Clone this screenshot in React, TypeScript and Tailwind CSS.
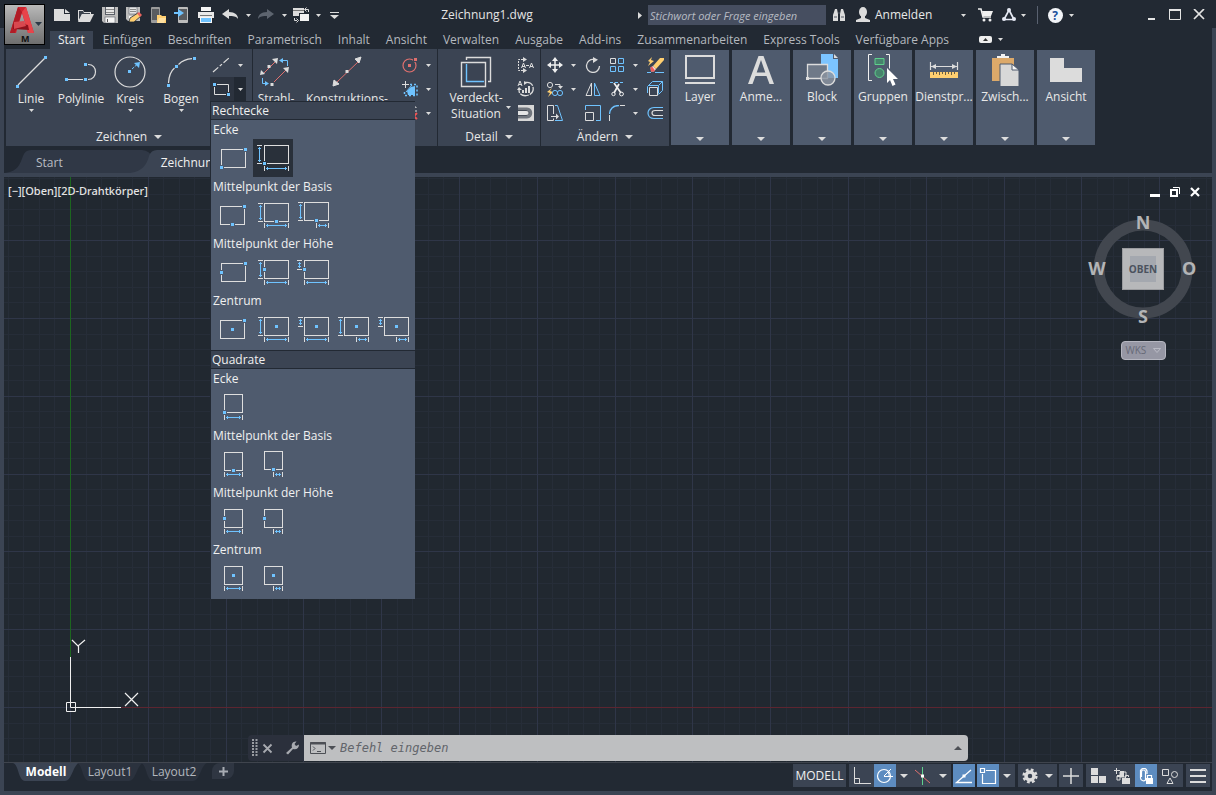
import React from "react";

type Kids = { children?: React.ReactNode };

function Ic({ w = 16, h = 16, children }: { w?: number; h?: number } & Kids) {
  return (
    <svg width={w} height={h} viewBox={`0 0 ${w} ${h}`} fill="none" className="shrink-0" aria-hidden="true">
      {children}
    </svg>
  );
}

const LIGHT = "#dcdcdc";
const BLUE = "#6fc3ff";
const RED = "#e0706e";
const YELLOW = "#ffcf70";

function Caret({ big = false }: { big?: boolean }) {
  return big ? (
    <Ic w={8} h={4}>
      <path d="M0 0h8L4 4z" fill={LIGHT} />
    </Ic>
  ) : (
    <Ic w={5} h={3}>
      <path d="M0 0h5L2.5 3z" fill={LIGHT} />
    </Ic>
  );
}

function Dot({ x, y, c = BLUE, halo }: { x: number; y: number; c?: string; halo?: string }) {
  return (
    <>
      {halo && <rect x={x - 2.5} y={y - 2.5} width={5} height={5} fill={halo} />}
      <rect x={x - 1.5} y={y - 1.5} width={3} height={3} fill={c} />
    </>
  );
}

/* ---------- quick access icons ---------- */

const NewIcon = () => (
  <Ic><path d="M0 2h10v5h6v7H0z" fill={LIGHT} /><path d="M11 2l5 4h-5z" fill={LIGHT} /></Ic>
);
const OpenIcon = () => (
  <Ic><path d="M0 14V3h5l1 2h7v2" fill={LIGHT} /><path d="M1 13V4h4l1 2h6v1H4z" fill="#3a414c" /><path d="M4 7h12l-4 8H0z" fill={LIGHT} /></Ic>
);
const SaveIcon = () => (
  <Ic>
    <path d="M0 0h16v16H2l-2-2z" fill="#bdbdbd" />
    <rect x="3" y="0" width="10" height="8" fill="#5a5f68" />
    <rect x="4" y="0" width="8" height="7" fill="#e6e6e6" />
    <path d="M4 2.500h8M4 5.500h8" stroke="#8a8a8a" />
    <rect x="3" y="10" width="10" height="6" fill="#f5f5f5" stroke="#5a5f68" strokeWidth=".6" />
    <rect x="5" y="12" width="1" height="3" fill="#555" />
  </Ic>
);
const SaveAsIcon = () => (
  <Ic w={17}>
    <path d="M0 0h14v14H2l-2-2z" fill="#bdbdbd" />
    <rect x="3" y="0" width="8" height="7" fill="#e6e6e6" stroke="#5a5f68" strokeWidth=".6" />
    <path d="M4 2.500h6M4 4.500h6" stroke="#8a8a8a" />
    <path d="M3 9h6v5H3z" fill="#f5f5f5" />
    <path d="M3 15l1-4 8-5 3 3-7 6z" fill={YELLOW} stroke="#222933" strokeWidth=".8" />
    <path d="M11 6.500l2-1.500 3 3-2 2z" fill="#e9645f" />
  </Ic>
);
const PhoneFolder = () => (
  <Ic><rect x="1" y="0" width="9" height="16" rx="1" fill="#9b9b9b" /><rect x="2" y="2" width="7" height="11" fill="#595c60" /><path d="M7 8h4l1 1h4v7H7z" fill={YELLOW} /><path d="M9 11h7l-2 5H7z" fill="#ffe0a0" /></Ic>
);
const PhoneArrow = () => (
  <Ic><rect x="4" y="0" width="10" height="16" rx="1" fill="#bcbcbc" /><rect x="5" y="2" width="8" height="11" fill="#595c60" /><path d="M0 5h4V2l6 4-6 4V7H0z" fill={BLUE} /></Ic>
);
const PrintIcon = () => (
  <Ic><path d="M3 0h10v4H3z" fill="#f5f5f5" /><rect x="0" y="5" width="16" height="6" fill="#e9e9e9" /><path d="M2 8.500h12" stroke="#777" /><path d="M2 10h12v6H2z" fill="#f5f5f5" /><rect x="3" y="11" width="10" height="4" fill={BLUE} /></Ic>
);
const UndoIcon = () => (
  <Ic><path d="M0 7l7-5v3c6 0 9 3 9 7-2-3-5-3-9-3v3z" fill={LIGHT} /></Ic>
);
const RedoIcon = () => (
  <Ic><path d="M16 7l-7-5v3c-6 0-9 3-9 7 2-3 5-3 9-3v3z" fill="#5d646f" /></Ic>
);
const WorkspaceIcon = () => (
  <Ic w={18}><rect x="0" y="1" width="11" height="8" fill={LIGHT} /><path d="M0 3.500h11" stroke="#777" /><rect x="6.500" y="6.500" width="10" height="8" fill="#f2f2f2" stroke="#222933" /><path d="M12 2.500h3.500V5M13.500 .5l-2 2 2 2M1.500 11v2.500H4M3.500 11.500l2 2-2 2" stroke={LIGHT} /></Ic>
);

/* ---------- ribbon icons ---------- */

const LineIcon = () => (
  <Ic w={32} h={32}><path d="M3 29L30 2" stroke={LIGHT} strokeWidth="1.2" /><Dot x={2.5} y={30.5} /><Dot x={30.5} y={1.5} /></Ic>
);
const PolylineIcon = () => (
  <Ic w={32} h={32}><path d="M3 23.500H18M23 8.500C33 8 33 23.500 23 23.500" stroke={LIGHT} strokeWidth="1.2" /><Dot x={1.5} y={23.500} /><Dot x={20.500} y={23.500} /><Dot x={20.500} y={8.500} /></Ic>
);
const CircleIcon = () => (
  <Ic w={32} h={32}><circle cx="16" cy="16" r="15" stroke={LIGHT} strokeWidth="1.2" /><Dot x={15.500} y={15.500} /><path d="M18 13l5-4.500" stroke={BLUE} strokeDasharray="3 1" /><path d="M20 7l6-1-1 6z" fill={BLUE} /></Ic>
);
const ArcIcon = () => (
  <Ic w={32} h={32}><path d="M3.500 27C3.800 20 6 15 9.500 12M13.500 8.500C17 5 22 3 27 2.700" stroke={LIGHT} strokeWidth="1.2" /><Dot x={3.500} y={29.500} /><Dot x={11.500} y={10.500} /><Dot x={29.500} y={2.500} /></Ic>
);
const RayIcon = () => (
  <Ic w={32} h={32}>
    <path d="M4 17L15 6M14 26l14-14" stroke={RED} />
    <path d="M12 3l6-1-1 6zM1 14l-1 5 5-1zM23 12l6-1-1 6z" fill={LIGHT} />
    <Dot x={9} y={10.500} c={LIGHT} /><Dot x={12} y={28.500} c={LIGHT} />
    <path d="M27.500 10V4.500H21M2.500 22v5.500H7" stroke={BLUE} />
    <path d="M23 2v5l-4-2.500zM5 25v5l4-2.500z" fill={BLUE} />
  </Ic>
);
const XLineIcon = () => (
  <Ic w={32} h={32}><path d="M5 27L28 5" stroke={RED} /><path d="M30 1l-6 2 4 4zM2 30l1-6 5 4z" fill={LIGHT} stroke={LIGHT} /><Dot x={16} y={15.500} c={LIGHT} /></Ic>
);
const HiddenViewIcon = () => (
  <Ic w={32} h={32}><path d="M1.500 6.500h24v24h-24z" stroke={LIGHT} strokeWidth="1.400" /><path d="M6.500 4V1.500h24v24H28" stroke={LIGHT} strokeWidth="1.400" /><path d="M6.500 8v17.500H24" stroke={BLUE} strokeWidth="1.400" /></Ic>
);
const SegmentIcon = () => (
  <Ic w={20}><path d="M1 15L17 1" stroke={LIGHT} strokeDasharray="7 2 3 2" strokeWidth="1.200" /></Ic>
);
const RectToolIcon = () => (
  <Ic w={20}><path d="M2.500 3.500h14v10h-14z" stroke={LIGHT} /><Dot x={2.500} y={3.500} halo="#2c333f" /><Dot x={16.500} y={13.500} halo="#2c333f" /></Ic>
);
const RedCircleIcon = () => (
  <Ic><circle cx="7.500" cy="8.500" r="6.500" stroke={RED} strokeWidth="1.200" /><Dot x={7.500} y={8.500} c={RED} /><Dot x={13.500} y={2.500} c={RED} halo="#3b4453" /></Ic>
);
const HatchRegion = () => (
  <Ic><path d="M5 10l4-4 4-1v9H6z" fill={BLUE} /><path d="M3.500 0v7M0 3.500h7" stroke={LIGHT} /><path d="M4 11l6-7" stroke={BLUE} /><path d="M8 3.500h7v11H2.500V9" stroke={BLUE} strokeDasharray="2 2" strokeWidth="1.500" /></Ic>
);
const EraseRegion = () => (
  <Ic><path d="M1 2h13v5" stroke={LIGHT} strokeDasharray="2 2" /><path d="M9 9l6 5M15 8l-6 6" stroke="#f05555" strokeWidth="2" /></Ic>
);
const TextDimIcon = () => (
  <Ic w={18}><path d="M6 2.500H1.500v11H6" stroke={LIGHT} strokeDasharray="2 1" /><path d="M6 0v5l4-2.500zM6 11v5l4-2.500z" fill={LIGHT} /><path d="M4.500 11l2-5 2 5M5 9.500h3M12.500 11l2-5 2 5M13 9.500h3M9 8.500h3" stroke={LIGHT} /></Ic>
);
const UpdateDimIcon = () => (
  <Ic w={18}><path d="M1 5l2-5 2 5M2 3.500h3" stroke={LIGHT} /><path d="M8 1.500c6-1 9 3 8 8s-9 7-13 3c-1-1-1-3-1-4" stroke={LIGHT} strokeDasharray="9 1" strokeWidth="1.300" /><path d="M7 0v4l3-2zM0 9h5L2 6z" fill={LIGHT} /><path d="M5 9h2v3H5zM8 7h2v5H8zM11 5h2v7h-2z" fill={LIGHT} /></Ic>
);
const SlotIcon = () => (
  <Ic><rect width="16" height="16" fill="#d7d7d7" /><path d="M0 4h9c5 0 5 8 0 8H0" stroke="#70757d" strokeWidth="3" /><path d="M0 5.500h8c4 0 4 5 0 5H0" fill="#e4e4e4" stroke="#454b55" /></Ic>
);
const MoveIcon = () => (
  <Ic><path d="M8 2v12M2 8h12" stroke="#f0f0f0" strokeWidth="1.500" /><path d="M8 0L5 4h6zM8 16l-3-4h6zM0 8l4-3v6zM16 8l-4-3v6z" fill="#f0f0f0" /></Ic>
);
const RotateIcon = () => (
  <Ic><path d="M9 2.500A6.500 6.500 0 1 0 14.500 9" stroke={LIGHT} strokeWidth="1.300" /><path d="M8 0l5 2.800L8 6z" fill={LIGHT} /></Ic>
);
const ArrayIcon = () => (
  <Ic><path d="M1.500 1.500h5v5h-5z" stroke={LIGHT} /><path d="M9.500 1.500h5v5h-5zM1.500 9.500h5v5h-5zM9.500 9.500h5v5h-5z" stroke={BLUE} /></Ic>
);
const ExplodeIcon = () => (
  <Ic w={17}><path d="M6 9l7-8h4v2l-8 9z" fill={YELLOW} /><path d="M5 0L1 4l2 1-2 4 6-5-3-1z" fill={YELLOW} /><path d="M3.500 10.500l2.500-1.500 3 3-2 2.500H4z" fill="#f6dada" /><path d="M3.500 10.500l1.500-1 3 4-1 1H4z" fill="#f05c5c" /><path d="M0 15.500h4M8 15.500h9" stroke={BLUE} /></Ic>
);
const CopyIcon = () => (
  <Ic><circle cx="3" cy="4" r="2.600" stroke={LIGHT} /><path d="M8 3.500h5v3" stroke={LIGHT} /><path d="M11 5h5l-2.500 3z" fill={LIGHT} /><path d="M5 7l-5 4 3 1-2 4 5-5-3-1z" fill={YELLOW} /><circle cx="8" cy="12" r="2.600" stroke={BLUE} /><circle cx="13" cy="12" r="2.600" stroke={BLUE} /></Ic>
);
const MirrorIcon = () => (
  <Ic><path d="M6.500 2v12.500H1z" stroke={LIGHT} /><path d="M9.500 2v12.500H15z" stroke={BLUE} /></Ic>
);
const TrimIcon = () => (
  <Ic><path d="M1 1.500h14" stroke={BLUE} strokeDasharray="3 2" /><path d="M5 2l7 10M10 3L5 12" stroke="#f0f0f0" strokeWidth="1.700" /><circle cx="4.500" cy="13" r="1.700" stroke="#f0f0f0" /><circle cx="12.500" cy="13" r="1.900" stroke="#f0f0f0" /></Ic>
);
const BoxIcon = () => (
  <Ic><path d="M2.500 6.500h8v8h-8z" stroke={LIGHT} /><path d="M.5 12V5.500l5-5h10v9l-4 4M2 4.500h9.500v8M12 4l3.500-3.500" stroke={BLUE} /></Ic>
);
const StretchIcon = () => (
  <Ic><path d="M6.500 9V.5h-6v15h6v-2M4 11.500h6" stroke={LIGHT} /><path d="M9 8.500l3 3-3 3z" fill={LIGHT} /><path d="M8 .5h2.500l5 15H8" stroke={BLUE} /></Ic>
);
const ScaleIcon = () => (
  <Ic><path d="M.5 7.500h8v8h-8z" stroke={LIGHT} /><path d="M.5 5V.5h15v15H11" stroke={BLUE} /></Ic>
);
const FilletIcon = () => (
  <Ic><path d="M.5 10v6M11 .5h5" stroke={LIGHT} /><path d="M.5 9C1 4 4 .5 10 .5" stroke={BLUE} strokeWidth="1.300" /></Ic>
);
const OffsetIcon = () => (
  <Ic><path d="M16 2.500H7c-8 0-8 11 0 11h9" stroke={BLUE} strokeWidth="1.200" /><path d="M16 5.500H8c-4 0-4 5 0 5h8" stroke={LIGHT} strokeWidth="1.200" /></Ic>
);

const LayerIcon = () => (
  <Ic w={32} h={32}><path d="M2 2h28v22H2z" stroke={LIGHT} strokeWidth="2" /><path d="M1 29h30" stroke={LIGHT} strokeWidth="2" /></Ic>
);
const AnnoIcon = () => (
  <Ic w={32} h={32}><path d="M13.500 2h5L29 30h-4.500l-3-8h-11l-3 8H3zM16 6l-4.300 12.500h8.600z" fill={LIGHT} fillRule="evenodd" /></Ic>
);
const BlockIcon = () => (
  <Ic w={32} h={32}><path d="M15 0h12v5h5v19H15z" fill="#7cc4ff" /><path d="M28 0l4 4h-4z" fill={LIGHT} /><path d="M1.500 10.500h20v14h-20z" fill="#6f7988" stroke={LIGHT} strokeWidth="1.300" /><circle cx="22" cy="24" r="7" fill="#8b93a0" fillOpacity=".8" stroke={LIGHT} strokeWidth="1.300" /><Dot x={1.500} y={24.500} c={LIGHT} /></Ic>
);
const GroupIcon = () => (
  <Ic w={32} h={32}><path d="M5 .5H1.500v26H5M19 .5h3.500v14" stroke="#f0f0f0" /><path d="M8 4.500h9v6H8z" fill="#46836c" stroke="#5fd08c" /><circle cx="12.500" cy="19" r="4.500" fill="#46836c" stroke="#5fd08c" /><path d="M20 14l11 11h-5l2.500 5.500-3 1.500-2.500-6-3 3z" fill="#fff" /></Ic>
);
const UtilIcon = () => (
  <Ic w={32} h={32}><path d="M2.500 8v8M29.500 8v8M3 12.500h26" stroke={LIGHT} strokeWidth="1.200" /><path d="M8 10l-5 2.500L8 15zM24 10l5 2.500-5 2.500z" fill={LIGHT} /><path d="M2 18h28v6H2z" fill={YELLOW} /><path d="M5.500 18v3M8.500 18v2M11.500 18v3M14.500 18v2M17.500 18v3M20.500 18v2M23.500 18v3M26.500 18v2" stroke="#6b5f45" /></Ic>
);
const ClipIcon = () => (
  <Ic w={32} h={32}><path d="M3 4h22v23H3z" fill="#dca96a" /><path d="M8 4V2h4V0h4v2h4v2z" fill="#f2f2f2" /><path d="M11 10h12l7 6v17H11z" fill="#d8d8d8" stroke="#4f5b6e" /><path d="M23 10l7 6h-7z" fill="#f6f6f6" stroke="#4f5b6e" /></Ic>
);
const ViewIcon = () => (
  <Ic w={32} h={32}><path d="M0 4h14v10h18v14H0z" fill={LIGHT} /></Ic>
);

/* ---------- rectangle gallery ---------- */

type Glyph = {
  name: string;
  rect: [number, number, number, number];
  dots: [number, number][];
  v?: [number, number, number];
  h?: [number, number];
  on?: boolean;
};

function RectGlyph({ g }: { g: Glyph }) {
  const [x, y, w, h] = g.rect;
  return (
    <Ic w={40} h={38}>
      <rect x={x} y={y} width={w} height={h} stroke="#dedede" />
      {g.v && (
        <>
          <path d={`M${g.v[0] - 2.500} ${g.v[1]}h5M${g.v[0] - 2.500} ${g.v[2]}h5`} stroke={LIGHT} />
          <path d={`M${g.v[0]} ${g.v[1] + 1.500}V${g.v[2] - 1.500}M${g.v[0] - 1.500} ${g.v[1] + 3}h3M${g.v[0] - 1.500} ${g.v[2] - 3}h3`} stroke={BLUE} />
        </>
      )}
      {g.h && (
        <>
          <path d={`M${g.h[0]} 27v5M${g.h[1]} 27v5`} stroke={LIGHT} />
          <path d={`M${g.h[0] + 1.500} 29.500H${g.h[1] - 1.500}M${g.h[0] + 3} 28v3M${g.h[1] - 3} 28v3`} stroke={BLUE} />
        </>
      )}
      {g.dots.map(([dx, dy], i) => (
        <Dot key={i} x={dx} y={dy} halo={g.on ? "#29303a" : "#4f5b6e"} />
      ))}
    </Ic>
  );
}

const FULL: [number, number] = [11.5, 35.5];
const HALF: [number, number] = [23.5, 35.5];
const SFULL: [number, number] = [11.5, 29.5];
const SHALF: [number, number] = [20.5, 29.5];

type Group = { label: string; items: Glyph[] };

const RECTS: Group[] = [
  {
    label: "Ecke",
    items: [
      { name: "Zwei Ecken", rect: [8.5, 10.5, 24, 18], dots: [[8.5, 28.5], [32.5, 10.5]] },
      { name: "Ecke, Breite und Höhe", rect: [11.5, 6.5, 24, 18], dots: [[11.5, 24.5]], v: [6.5, 6.5, 24.5], h: FULL, on: true },
    ],
  },
  {
    label: "Mittelpunkt der Basis",
    items: [
      { name: "Basis und Ecke", rect: [7.5, 10.5, 24, 18], dots: [[19.5, 28.5], [31.5, 10.5]] },
      { name: "Basis, Breite und Höhe", rect: [11.5, 7.5, 24, 18], dots: [[23.5, 25.5]], v: [7.5, 7.5, 25.5], h: FULL },
      { name: "Basis, halbe Breite", rect: [11.5, 6.5, 24, 18], dots: [[23.5, 24.5]], v: [7.5, 6.5, 24.5], h: HALF },
    ],
  },
  {
    label: "Mittelpunkt der Höhe",
    items: [
      { name: "Höhe und Ecke", rect: [8.5, 10.5, 24, 18], dots: [[8.5, 19.5], [32.5, 10.5]] },
      { name: "Höhe und Breite", rect: [11.5, 7.5, 24, 18], dots: [[11.5, 16.5]], v: [7.5, 7.5, 25.5], h: FULL },
      { name: "Halbe Höhe und Breite", rect: [11.5, 7.5, 24, 18], dots: [[11.5, 16.5]], v: [6.5, 7.5, 16.5], h: FULL },
    ],
  },
  {
    label: "Zentrum",
    items: [
      { name: "Zentrum und Ecke", rect: [7.5, 10.5, 24, 18], dots: [[19.5, 19.5], [31.5, 10.5]] },
      { name: "Zentrum, Breite und Höhe", rect: [11.5, 7.5, 24, 18], dots: [[23.5, 16.5]], v: [7.5, 7.5, 25.5], h: FULL },
      { name: "Zentrum, halbe Höhe", rect: [11.5, 7.5, 24, 18], dots: [[23.5, 16.5]], v: [7.5, 7.5, 16.5], h: FULL },
      { name: "Zentrum, halbe Breite", rect: [11.5, 7.5, 24, 18], dots: [[23.5, 16.5]], v: [7.5, 7.5, 25.5], h: HALF },
      { name: "Zentrum, halbe Breite und Höhe", rect: [11.5, 7.5, 24, 18], dots: [[23.5, 16.5]], v: [7.5, 7.5, 16.5], h: HALF },
    ],
  },
];

const SQUARES: Group[] = [
  { label: "Ecke", items: [{ name: "Quadrat Ecke", rect: [11.5, 6.5, 18, 18], dots: [[11.5, 24.5]], h: SFULL }] },
  {
    label: "Mittelpunkt der Basis",
    items: [
      { name: "Quadrat Basis", rect: [11.5, 7.5, 18, 18], dots: [[20.5, 25.5]], h: SFULL },
      { name: "Quadrat Basis, halb", rect: [11.5, 6.5, 18, 18], dots: [[20.5, 24.5]], h: SHALF },
    ],
  },
  {
    label: "Mittelpunkt der Höhe",
    items: [
      { name: "Quadrat Höhe", rect: [11.5, 7.5, 18, 18], dots: [[11.5, 16.5]], h: SFULL },
      { name: "Quadrat Höhe, halb", rect: [11.5, 7.5, 18, 18], dots: [[11.5, 16.5]], h: SHALF },
    ],
  },
  {
    label: "Zentrum",
    items: [
      { name: "Quadrat Zentrum", rect: [11.5, 7.5, 18, 18], dots: [[20.5, 16.5]], h: SFULL },
      { name: "Quadrat Zentrum, halb", rect: [11.5, 7.5, 18, 18], dots: [[20.5, 16.5]], h: SHALF },
    ],
  },
];

function Gallery({ title, groups }: { title: string; groups: Group[] }) {
  return (
    <section className="pb-0.5">
      <h3 className="h-[19px] border-y border-[#222933] bg-[#3b4453] px-px text-xs leading-[18px] font-normal text-[#f0f0f0]">{title}</h3>
      {groups.map((g) => (
        <div key={g.label} className="pl-0.5">
          <h4 className="h-[19px] text-xs leading-[19px] font-normal text-[#f0f0f0]">{g.label}</h4>
          <div className="flex h-[38px]">
            {g.items.map((it) => (
              <button key={it.name} aria-label={it.name} className={it.on ? "bg-[#29303a]" : ""}>
                <RectGlyph g={it} />
              </button>
            ))}
          </div>
        </div>
      ))}
    </section>
  );
}

/* ---------- ribbon parts ---------- */

function Panel({ title, className, children }: { title?: string; className: string } & Kids) {
  return (
    <section className={`flex shrink-0 flex-col border-r border-[#222933] bg-[#3b4453] ${className}`}>
      <div className="flex flex-1 pt-1">{children}</div>
      <button className="flex h-[18px] items-center justify-center gap-[7px] text-xs leading-4">
        {title && (
          <>
            <span>{title}</span>
            <Caret big />
          </>
        )}
      </button>
    </section>
  );
}

function BigTool({ icon, label, className, caret = true }: { icon: React.ReactNode; label: string; className: string; caret?: boolean }) {
  return (
    <button className={`flex flex-col items-center pt-[3px] ${className}`}>
      {icon}
      <span className="mt-[3px] mb-0.5 text-xs leading-4 whitespace-nowrap">{label}</span>
      {caret && <Caret />}
    </button>
  );
}

function Small({ icon, name, caret = false }: { icon: React.ReactNode; name: string; caret?: boolean }) {
  return (
    <div className="flex h-6 items-center">
      <button aria-label={name} className="flex w-6 justify-center">{icon}</button>
      {caret && (
        <button aria-label={`${name} Optionen`} className="flex w-3 justify-center">
          <Caret />
        </button>
      )}
    </div>
  );
}

const COLLAPSED: [string, React.ReactNode][] = [
  ["Layer", <LayerIcon />],
  ["Anme...", <AnnoIcon />],
  ["Block", <BlockIcon />],
  ["Gruppen", <GroupIcon />],
  ["Dienstpr...", <UtilIcon />],
  ["Zwisch...", <ClipIcon />],
  ["Ansicht", <ViewIcon />],
];

const MENU = ["Start", "Einfügen", "Beschriften", "Parametrisch", "Inhalt", "Ansicht", "Verwalten", "Ausgabe", "Add-ins", "Zusammenarbeiten", "Express Tools", "Verfügbare Apps"];

const QAT: [string, React.ReactNode, string][] = [
  ["Neu", <NewIcon />, "w-6"],
  ["Öffnen", <OpenIcon />, "w-6"],
  ["Speichern", <SaveIcon />, "w-6"],
  ["Speichern unter", <SaveAsIcon />, "w-6"],
  ["Aus Web öffnen", <PhoneFolder />, "w-6"],
  ["In Web speichern", <PhoneArrow />, "w-6"],
  ["Plotten", <PrintIcon />, "w-6"],
  ["Zurück", <UndoIcon />, "w-6"],
  ["Zurück Liste", <Caret />, "w-3"],
  ["Wiederholen", <RedoIcon />, "w-6"],
  ["Wiederholen Liste", <Caret />, "w-3"],
  ["Arbeitsbereich", <WorkspaceIcon />, "w-6"],
  ["Arbeitsbereich Liste", <Caret />, "w-2"],
  ["Anpassen", <Ic w={9} h={8}><path d="M0 1.500h9" stroke={LIGHT} /><path d="M0 4h9L4.500 8z" fill={LIGHT} /></Ic>, "w-6"],
];

function TitleBar() {
  return (
    <header className="relative flex h-7 shrink-0 items-center pt-0.5 pl-[50px]">
      <button aria-label="Anwendungsmenü" className="absolute top-1 left-1 z-10 h-[41px] w-[41px] border border-black bg-linear-to-b from-[#b9b9b9] to-[#6e6e6e]">
        <Ic w={39} h={39}>
          <path d="M13 2h8l8 26h-6l-6-20-6 20H5z" fill="#d02530" />
          <path d="M13 2l4 5-7 21H5z" fill="#b01c26" />
          <path d="M17 7l4-5 8 26h-6z" fill="#e8444a" />
          <path d="M9 17l14 3 1 5-16-1z" fill="#8f121c" />
          <path d="M9 17l10-1 2 5-12 3z" fill="#d9484f" />
          <path d="M30 17h7l-3.500 4z" fill="#2c3947" />
          <text x="16" y="37" fontSize="9" fontWeight="700" fill="#111" fontFamily="Noto Sans">M</text>
        </Ic>
      </button>
      <div className="flex shrink-0 items-center">
        {QAT.map(([n, ic, w]) => (
          <button key={n} aria-label={n} className={`flex justify-center ${w}`}>{ic}</button>
        ))}
      </div>
      <h1 className="flex-1 pr-1 text-center text-xs font-normal text-[#e4e4e4]">Zeichnung1.dwg</h1>
      <button aria-label="Suche einblenden" className="flex w-4 justify-center"><Ic w={4} h={7}><path d="M0 0v7l4-3.500z" fill={LIGHT} /></Ic></button>
      <input aria-label="Suche" placeholder="Stichwort oder Frage eingeben" className="h-5 w-[178px] bg-[#464e60] px-0.5 text-[11px] italic outline-none placeholder:text-[#b7bbc3]" />
      <button aria-label="Suchen" className="flex w-[26px] justify-center">
        <Ic w={14}><path d="M1 14V8l2-6h2l1 5v7zM13 14V8l-2-6H9L8 7v7z" fill={LIGHT} /><path d="M2 10h3M9 10h3M6 6h2" stroke="#555b66" /></Ic>
      </button>
      <button className="flex w-[105px] items-center gap-[5px] pl-1 text-xs">
        <Ic w={14}><ellipse cx="7" cy="5" rx="4" ry="5" fill={LIGHT} /><path d="M5 9h4v2l5 2v2H0v-2l5-2z" fill={LIGHT} /></Ic>
        Anmelden
      </button>
      <button aria-label="Konto" className="flex w-3 justify-center"><Caret /></button>
      <button aria-label="App Store" className="flex w-8 justify-center">
        <Ic w={15}><path d="M0 2h3l2 8h8" stroke="#f0f0f0" strokeWidth="1.500" /><path d="M4 4h11l-2 5H5z" fill="#f0f0f0" /><circle cx="6" cy="13" r="1.500" fill="#f0f0f0" /><circle cx="12" cy="13" r="1.500" fill="#f0f0f0" /></Ic>
      </button>
      <button aria-label="Autodesk" className="flex w-4 justify-center">
        <Ic><path d="M8 3l5 9.500H3z" stroke="#e4e8f2" strokeWidth="1.700" /><circle cx="8" cy="3" r="2" fill="#e4e8f2" /><circle cx="3" cy="12" r="2" fill="#e4e8f2" /><circle cx="13" cy="12" r="2" fill="#e4e8f2" /></Ic>
      </button>
      <button aria-label="Autodesk Liste" className="flex w-3 justify-center"><Caret /></button>
      <div className="flex w-4 justify-center"><div className="h-[18px] w-px bg-[#596170]" /></div>
      <button aria-label="Hilfe" className="flex w-5 justify-center">
        <span className="h-[15px] w-[15px] rounded-full bg-[#f2f4f8] text-center text-xs leading-[15px] font-bold text-[#1b4f9c]">?</span>
      </button>
      <button aria-label="Hilfe Liste" className="flex w-3 justify-center"><Caret /></button>
      <div className="ml-[62px] flex pr-[5px]">
        <button aria-label="Minimieren" className="flex w-6 justify-center"><Ic w={12} h={12}><path d="M3 10h7" stroke="#e4e4e4" strokeWidth="2" /></Ic></button>
        <button aria-label="Maximieren" className="flex w-6 justify-center"><Ic w={12} h={12}><path d="M.5 .5h11v10H.5z" stroke="#e4e4e4" /><path d="M0 1h12" stroke="#e4e4e4" strokeWidth="2" /></Ic></button>
        <button aria-label="Schließen" className="flex w-6 justify-center"><Ic w={12} h={12}><path d="M1 0l10 10M11 0L1 10" stroke="#e4e4e4" strokeWidth="1.700" /></Ic></button>
      </div>
    </header>
  );
}

function MenuTabs() {
  return (
    <nav className="flex h-[21px] shrink-0 items-end pl-[46px] text-xs">
      {MENU.map((m, i) => (
        <button key={m} className={i === 0 ? "mr-0.5 h-[18px] bg-[#3b4453] px-2 leading-4 text-[#f0f0f0]" : "h-[18px] px-2 leading-4 whitespace-nowrap text-[#b4b8be]"}>
          {m}
        </button>
      ))}
      <button aria-label="Multifunktionsleiste" className="flex h-[18px] items-center gap-[6px] pb-0.5 pl-[22px]">
        <Ic w={13} h={7}><rect width="13" height="7" rx="2" fill="#eee" /><path d="M6.500 2L9 5H4z" fill="#333" /></Ic>
        <Caret />
      </button>
    </nav>
  );
}

function Ribbon() {
  return (
    <div className="flex h-[97px] shrink-0 pl-0.5 text-[#e8e8e8]">
      <Panel title="Zeichnen" className="w-[247px]">
        <BigTool icon={<LineIcon />} label="Linie" className="w-[50px]" />
        <BigTool icon={<PolylineIcon />} label="Polylinie" className="w-[50px]" caret={false} />
        <BigTool icon={<CircleIcon />} label="Kreis" className="w-12" />
        <BigTool icon={<ArcIcon />} label="Bogen" className="w-[54px]" />
        <div className="ml-0.5 w-9">
          <div className="flex h-6 items-center">
            <button aria-label="Segment" className="flex w-6 justify-center"><SegmentIcon /></button>
            <button aria-label="Segment Liste" className="flex w-3 justify-center"><Caret /></button>
          </div>
          <div className="relative">
            <div className="flex h-6 bg-[#222933]">
              <button aria-label="Rechteck" className="flex w-6 items-center justify-center bg-[#2c333f]"><RectToolIcon /></button>
              <button aria-label="Rechteck Liste" className="flex w-3 items-center justify-center"><Caret /></button>
            </div>
            <div className="absolute top-full left-0 z-20 w-[205px] border-l border-[#222933] bg-[#4f5b6e]">
              <Gallery title="Rechtecke" groups={RECTS} />
              <Gallery title="Quadrate" groups={SQUARES} />
            </div>
          </div>
        </div>
      </Panel>
      <Panel className="w-[185px]">
        <BigTool icon={<RayIcon />} label="Strahl-" className="w-[46px]" caret={false} />
        <BigTool icon={<XLineIcon />} label="Konstruktions-" className="w-24" caret={false} />
        <div className="ml-[3px]">
          <Small icon={<RedCircleIcon />} name="Kreis Mittelpunkt" caret />
          <Small icon={<HatchRegion />} name="Schraffur" caret />
          <Small icon={<EraseRegion />} name="Abdecken" caret />
        </div>
      </Panel>
      <Panel title="Detail" className="w-[103px]">
        <button className="flex w-[76px] flex-col items-center pt-[3px]">
          <HiddenViewIcon />
          <span className="mt-0.5 text-xs leading-4">Verdeckt-<br />Situation</span>
        </button>
        <div className="relative">
          <div className="absolute top-[53px] -left-2"><Caret /></div>
          <Small icon={<TextDimIcon />} name="Bemaßung" />
          <Small icon={<UpdateDimIcon />} name="Aktualisieren" />
          <Small icon={<SlotIcon />} name="Langloch" />
        </div>
      </Panel>
      <Panel title="Ändern" className="w-[129px]">
        <div className="ml-0.5 w-[38px]">
          <Small icon={<MoveIcon />} name="Schieben" caret />
          <Small icon={<CopyIcon />} name="Kopieren" caret />
          <Small icon={<StretchIcon />} name="Strecken" />
        </div>
        <div>
          <Small icon={<RotateIcon />} name="Drehen" />
          <Small icon={<MirrorIcon />} name="Spiegeln" />
          <Small icon={<ScaleIcon />} name="Skalieren" />
        </div>
        <div className="w-[38px]">
          <Small icon={<ArrayIcon />} name="Anordnung" caret />
          <Small icon={<TrimIcon />} name="Stutzen" caret />
          <Small icon={<FilletIcon />} name="Abrunden" caret />
        </div>
        <div>
          <Small icon={<ExplodeIcon />} name="Auflösen" />
          <Small icon={<BoxIcon />} name="Volumen" />
          <Small icon={<OffsetIcon />} name="Versetzen" />
        </div>
      </Panel>
      <div className="ml-px flex gap-[3px] py-px">
        {COLLAPSED.map(([label, icon]) => (
          <button key={label} className="flex w-[58px] flex-col items-center overflow-hidden bg-[#4f5b6e] pt-1">
            {icon}
            <span className="mt-[3px] text-xs leading-4 whitespace-nowrap">{label}</span>
            <span className="mt-auto pb-1"><Caret big /></span>
          </button>
        ))}
      </div>
    </div>
  );
}

function DocTabs() {
  return (
    <div className="relative flex h-[31px] shrink-0 items-end border-b-4 border-[#3b4453] text-xs">
      <div className="absolute bottom-0 left-0">
        <Ic w={520} h={23}>
          <path d="M0 23C14 22 16 14 19 6Q21 0 27 0H138Q146 1 148 7V23z" fill="#303846" />
          <path d="M126 23C138 22 143 14 145 6Q147 0 153 0H300V23z" fill="#3b4453" />
        </Ic>
      </div>
      <button className="relative flex h-[21px] items-center pl-8 text-[#b9bdc3]">Start</button>
      <button className="relative ml-[98px] flex h-[21px] items-center text-[#f0f0f0]">Zeichnung1</button>
    </div>
  );
}

function Canvas() {
  const step = 77.8;
  const lines = Array.from({ length: 200 }, (_, i) => i - 40);
  return (
    <main className="relative min-h-0 flex-1 overflow-hidden bg-[#212830]">
      <svg className="absolute inset-0 h-full w-full" fill="none" aria-hidden="true">
        {[false, true].map((major) =>
          lines
            .filter((i) => (i % 5 === 0) === major)
            .map((i) => {
              const x = Math.round(66 + (i * step) / 5) + 0.5;
              const y = Math.round(530 + (i * step) / 5) + 0.5;
              return <path key={i} d={`M${x} 0V4000M0 ${y}H4000`} stroke={major ? "#2f3648" : "#262d38"} />;
            }),
        )}
        <path d="M66.500 0V480" stroke="#1c661f" />
        <path d="M117 530.500H4000" stroke="#5d2530" />
        <path d="M66.500 480V530.500H117M62.500 525.500h9v9h-9z" stroke="#f0f0f0" />
        <path d="M68 463l6 6 7-6M74.500 469v7M121 516l13 13M134 516l-13 13" stroke="#f0f0f0" strokeWidth="1.200" />
      </svg>

      <div className="relative flex justify-between pt-1 pr-[7px] pl-1">
        <div className="font-['Noto_Sans',sans-serif] text-[11px] font-medium leading-5 text-[#e4e4e4]">[−][Oben][2D-Drahtkörper]</div>
        <div className="flex items-center pt-0.5">
          <button aria-label="Zeichnung minimieren" className="flex w-5 justify-center"><Ic w={12} h={12}><path d="M1 9.500h10" stroke="#fff" strokeWidth="3" /></Ic></button>
          <button aria-label="Zeichnung wiederherstellen" className="flex w-5 justify-center"><Ic w={12} h={12}><path d="M2 4h6v6H2z" stroke="#fff" strokeWidth="2" /><path d="M4 1.500h6.500V8" stroke="#fff" /></Ic></button>
          <button aria-label="Zeichnung schließen" className="flex w-5 justify-center"><Ic w={12} h={12}><path d="M2 2l8 8M10 2l-8 8" stroke="#fff" strokeWidth="2.200" /></Ic></button>
        </div>
      </div>

      <div className="absolute top-[26px] right-[13px] flex flex-col items-center">
        <svg width={112} height={132} viewBox="0 -10 112 132" fill="none" fontFamily="Noto Sans" fontWeight="700" textAnchor="middle" role="img" aria-label="ViewCube">
          <circle cx="56" cy="56" r="44" stroke="#42474f" strokeWidth="11" />
          <g fontSize="18" fill="#b3b4b6">
            <text x="56" y="16">N</text>
            <text x="56" y="110">S</text>
            <text x="10" y="62">W</text>
            <text x="102" y="62">O</text>
          </g>
          <rect x="35.500" y="35.500" width="41" height="41" fill="#b7b8ba" stroke="#9b9c9f" />
          <rect x="43" y="43" width="26" height="26" fill="#a4a8af" />
          <text x="56" y="60" fontSize="10" fontFamily="Open Sans" fill="#4b525e">OBEN</text>
        </svg>
        <button className="mt-[6px] flex h-[19px] w-[45px] items-center justify-between rounded border border-[#b5b6c0] bg-[#9697a4] px-1 text-[10px] text-[#666a78]">
          WKS
          <Ic w={8} h={5}><path d="M.5 .5h7L4 4.500z" stroke="#b9bac4" /></Ic>
        </button>
      </div>

      <div className="absolute bottom-px left-[244px] flex h-[26px] w-[720px] items-stretch rounded">
        <div className="flex w-14 items-center rounded-l bg-[#2b303c] pl-1">
          <Ic w={6} h={18}><path d="M1 0v18M4.500 0v18" stroke="#9a9da3" strokeWidth="2" strokeDasharray="2 1" /></Ic>
          <button aria-label="Befehlszeile schließen" className="ml-1"><Ic w={11} h={11}><path d="M1.500 1.500l8 8M9.500 1.500l-8 8" stroke="#a8aab0" strokeWidth="1.800" /></Ic></button>
          <button aria-label="Anpassen" className="ml-3"><Ic w={14} h={14}><path d="M1 12L7 6.500C6 3 8 0 11.500 .500L9.500 3l1.500 2 3-1.500C14 7 11.500 9 8 8L3 13.500z" fill="#a8aab0" /></Ic></button>
        </div>
        <div className="flex flex-1 items-center rounded-r-sm bg-[#bebfc1] px-[6px]">
          <button aria-label="Letzte Befehle" className="flex items-center gap-0.5">
            <Ic w={16} h={12}><path d="M.5 .5h15v11H.5z" stroke="#4c4f55" /><path d="M0 1.500h16" stroke="#4c4f55" strokeWidth="2" /><path d="M3 4.500l2 2-2 2M7 9.500h4" stroke="#4c4f55" /></Ic>
            <Ic w={8} h={4}><path d="M0 0h8L4 4z" fill="#4c4f55" /></Ic>
          </button>
          <input aria-label="Befehl" placeholder="Befehl eingeben" className="ml-1 min-w-0 flex-1 bg-transparent font-['DejaVu_Sans_Mono',monospace] text-[12px] italic outline-none placeholder:text-[#62656b]" />
          <Ic w={8} h={4}><path d="M0 4h8L4 0z" fill="#4c4f55" /></Ic>
        </div>
      </div>
    </main>
  );
}

function SB({ name, w = "w-6", on = false, children }: { name: string; w?: string; on?: boolean } & Kids) {
  return (
    <button aria-label={name} className={`flex items-center justify-center ${w} ${on ? "bg-[#5d8cc0]" : ""}`}>
      {children}
    </button>
  );
}

function LayoutTab({ label, on = false }: { label: string; on?: boolean }) {
  return (
    <button className="relative -mr-0.5 h-[18px] w-[66px]">
      <svg viewBox="0 0 66 18" width={66} height={18} className="absolute top-0 left-0" aria-hidden="true">
        <path d="M0 0H66C60 2 59 18 52 18H12C5 17 6 2 0 0z" fill={on ? "#3b4453" : "#2b323e"} />
      </svg>
      <span className={on ? "relative block text-xs leading-4 font-bold text-white" : "relative block text-xs leading-4 text-[#b4b8be]"}>{label}</span>
    </button>
  );
}

function StatusBar() {
  return (
    <footer className="flex h-[29px] shrink-0 justify-between border-t border-[#3f444d]">
      <div className="flex pl-[9px]">
        <LayoutTab label="Modell" on />
        <LayoutTab label="Layout1" />
        <LayoutTab label="Layout2" />
        <button aria-label="Neues Layout" className="ml-[7px] flex h-4 w-[22px] items-center justify-center rounded-br-lg rounded-tl-lg bg-[#2f3642]">
          <Ic w={9} h={9}><path d="M4.500 0v9M0 4.500h9" stroke="#a8acb3" strokeWidth="2" /></Ic>
        </button>
      </div>
      <div className="flex gap-[3px] pt-px pr-0.5 pb-1">
        <div className="flex bg-[#3b4453]"><button className="w-[53px] text-xs text-[#f0f0f0]">MODELL</button></div>
        <div className="flex bg-[#3b4453]">
          <SB name="Ortho" w="w-[25px]"><Ic w={18} h={18}><path d="M1.500 0v16.500H18M1.500 11.500h5v5" stroke={LIGHT} /></Ic></SB>
          <SB name="Polar" w="w-[22px]" on><Ic w={18} h={18}><circle cx="8" cy="9" r="6.500" stroke="#fff" strokeWidth="1.200" /><path d="M8 9.500h9M8 9l7-7" stroke="#fff" /><path d="M12 5a6 6 0 0 1 1 5" stroke="#fff" /></Ic></SB>
          <SB name="Polar Liste" w="w-4"><Caret big /></SB>
          <SB name="Isometrie" w="w-[22px]"><Ic w={18} h={18}><path d="M1 3l15 13" stroke={RED} /><path d="M8.500 0v18" stroke="#5fd08c" /><Dot x={8.500} y={9} c="#fff" /></Ic></SB>
          <SB name="Isometrie Liste" w="w-[17px]"><Caret big /></SB>
        </div>
        <div className="-ml-px flex bg-[#3b4453]">
          <SB name="Objektfangspur" w="w-[22px]" on><Ic w={18} h={18}><path d="M16 3L1.500 15.500H17" stroke="#fff" strokeWidth="1.300" /><Dot x={9} y={9} c="#fff" /></Ic></SB>
          <div className="w-[2px] bg-[#222933]" />
          <SB name="Objektfang" w="w-[22px]" on><Ic w={18} h={18}><path d="M7 3.500h9.500v13h-13V7M1.500 1.500h4v4h-4z" stroke="#fff" strokeWidth="1.200" /></Ic></SB>
          <SB name="Objektfang Liste" w="w-4"><Caret big /></SB>
        </div>
        <div className="flex bg-[#3b4453]">
          <SB name="Einstellungen" w="w-[23px]"><Ic><circle cx="8" cy="8" r="4" stroke={LIGHT} strokeWidth="3.500" /><circle cx="8" cy="8" r="6.300" stroke={LIGHT} strokeWidth="2.600" strokeDasharray="2.700 2.250" /></Ic></SB>
          <SB name="Einstellungen Liste" w="w-4"><Caret big /></SB>
        </div>
        <div className="-ml-px flex bg-[#3b4453]">
          <SB name="Maßstab"><Ic><path d="M8 0v16M0 8h16" stroke={LIGHT} strokeWidth="1.500" /></Ic></SB>
        </div>
        <div className="flex bg-[#3b4453]">
          <SB name="Eigenschaften" w="w-[23px]"><Ic><path d="M1 0h7v7H1zM1 8h7v7H1zM9 8h7v7H9z" fill={LIGHT} /></Ic></SB>
          <SB name="Sperren" w="w-[26px]"><Ic><path d="M0 2.500h6M2.500 0v6M6 4h6v5H6zM3 8h3v4H3z" stroke={LIGHT} /><path d="M6 3h4v6H3V7h3z" fill={LIGHT} /><rect x="8" y="10" width="8" height="6" fill={LIGHT} /><path d="M11.500 10V7.500h3V9" stroke={LIGHT} /></Ic></SB>
          <SB name="Fixieren" w="w-[22px]" on><Ic><path d="M2.500 2v8a3 3 0 0 0 5 2V4a2 2 0 0 0-4 0v5M2.500 3C3 0 8-1 9 3v3" stroke="#fff" strokeWidth="1.200" /><rect x="8" y="10" width="7" height="6" fill="#fff" /><path d="M9.500 10V7.500h4V10" stroke="#fff" strokeWidth="1.200" /></Ic></SB>
          <SB name="Isolieren" w="w-[26px]"><Ic><path d="M.5 1.500h6v6h-6zM5 15.500L8 10l3 5.500z" stroke={LIGHT} /><circle cx="12.500" cy="6.500" r="3" stroke={LIGHT} /></Ic></SB>
        </div>
        <div className="flex bg-[#3b4453]">
          <SB name="Anpassung"><Ic><path d="M0 2h16M0 8h16M0 14h16" stroke={LIGHT} strokeWidth="2" /></Ic></SB>
        </div>
      </div>
    </footer>
  );
}

export default function App() {
  return (
    <div className="flex h-screen min-w-[1200px] flex-col overflow-hidden bg-[#222933] font-['Open_Sans',sans-serif] text-[#e8e8e8]">
      <TitleBar />
      <div className="flex min-h-0 flex-1 flex-col border-x-4 border-b-4 border-[#3b4453]">
        <div className="flex min-h-0 flex-1 flex-col bg-[#222933]">
          <MenuTabs />
          <Ribbon />
          <DocTabs />
          <Canvas />
          <StatusBar />
        </div>
      </div>
    </div>
  );
}
